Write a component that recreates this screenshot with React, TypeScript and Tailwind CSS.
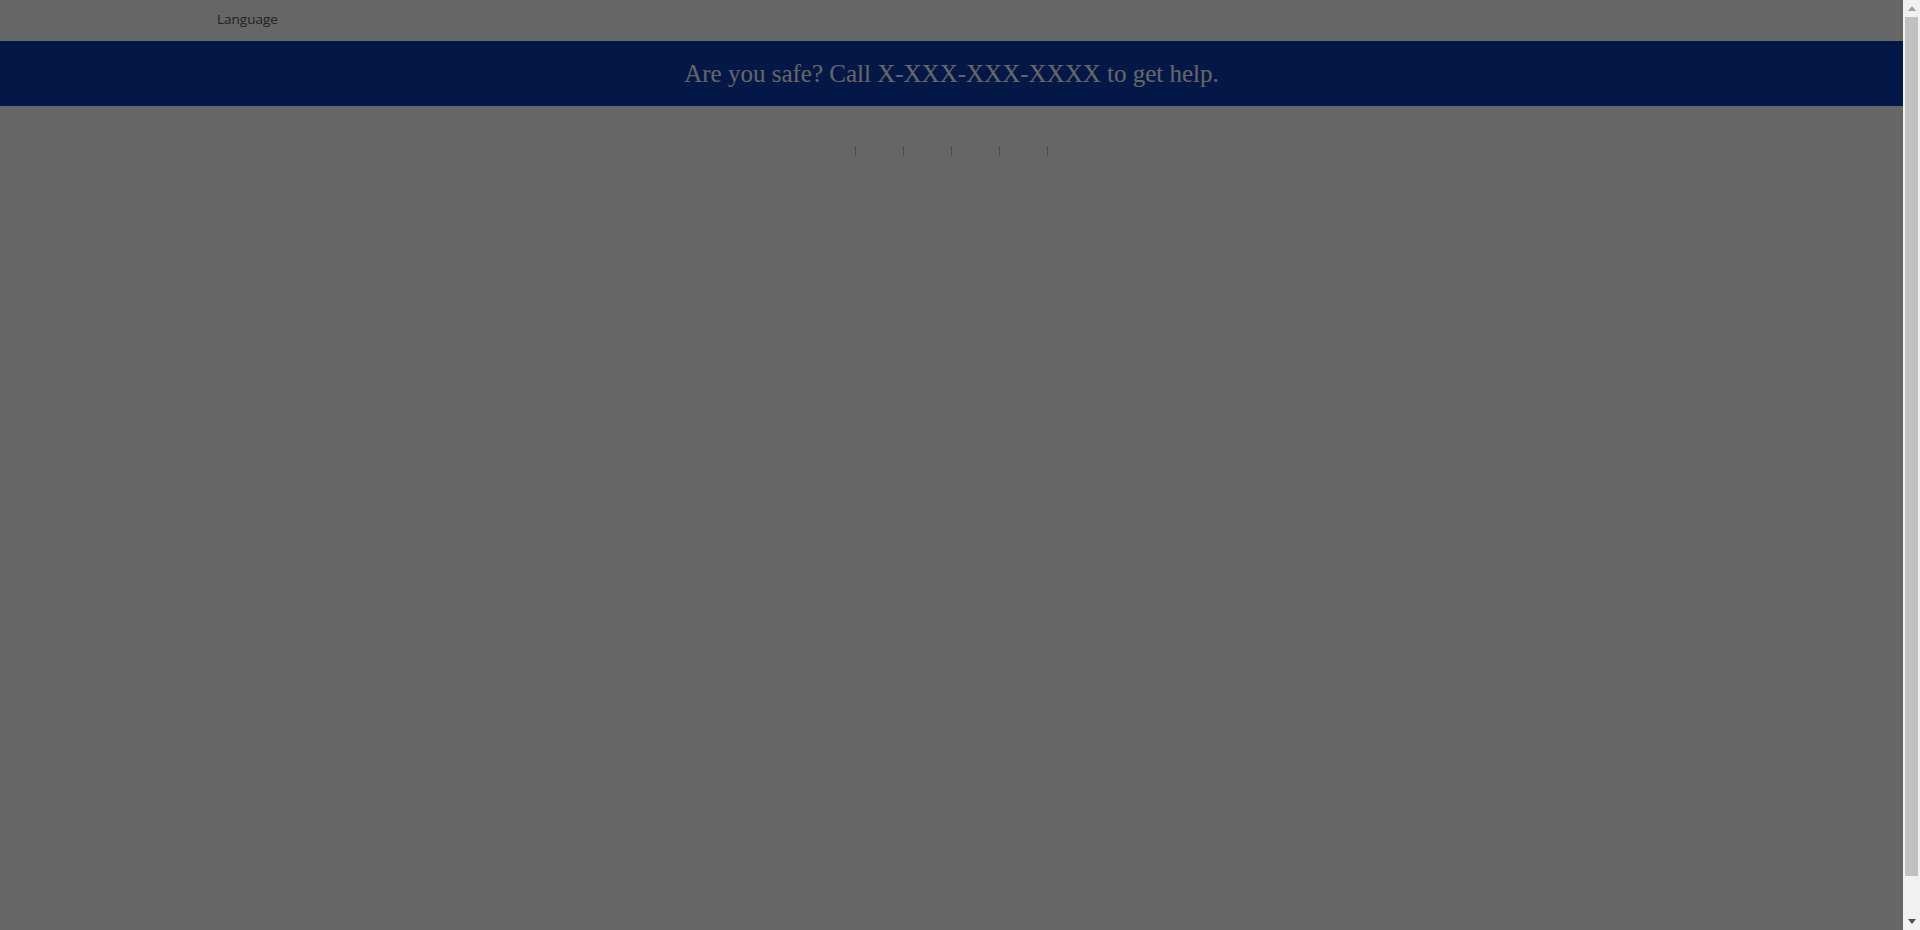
export default function App() {
  const links = ['', '', '', '', ''];
  return (
    <div className="flex h-[930px] overflow-hidden bg-white">
      <main className="relative flex-1">
        <div className="h-[41px] flex items-center pl-[217px]">
          <span className="text-[13.5px] text-[#555] font-['Open_Sans',sans-serif] leading-none pb-[2px]">Language</span>
        </div>
        <div className="h-[65px] bg-[#0b3cb4] flex items-center justify-center">
          <p className="text-white text-[25px] font-['Liberation_Serif',serif] leading-none">
            Are you safe? Call X-XXX-XXX-XXXX to get help.
          </p>
        </div>
        <nav className="flex justify-center pt-[40px]">
          <ul className="flex gap-[47px]">
            {links.map((l, i) => (
              <li key={i} className="w-px h-[10px] bg-[#bbbbbb]">{l}</li>
            ))}
          </ul>
        </nav>
        <div className="absolute inset-0 bg-black/60" />
      </main>
      <aside className="w-[17px] bg-[#f1f1f1] flex flex-col">
        <div className="h-[17px] flex items-center justify-center">
          <svg width="8" height="5" viewBox="0 0 8 5"><path d="M4 0 8 5H0z" fill="#a3a3a3" /></svg>
        </div>
        <div className="h-[859px] mx-[2px] bg-[#c1c1c1]" />
        <div className="mt-auto h-[17px] flex items-center justify-center">
          <svg width="8" height="5" viewBox="0 0 8 5"><path d="M0 0h8L4 5z" fill="#505050" /></svg>
        </div>
      </aside>
    </div>
  );
}
